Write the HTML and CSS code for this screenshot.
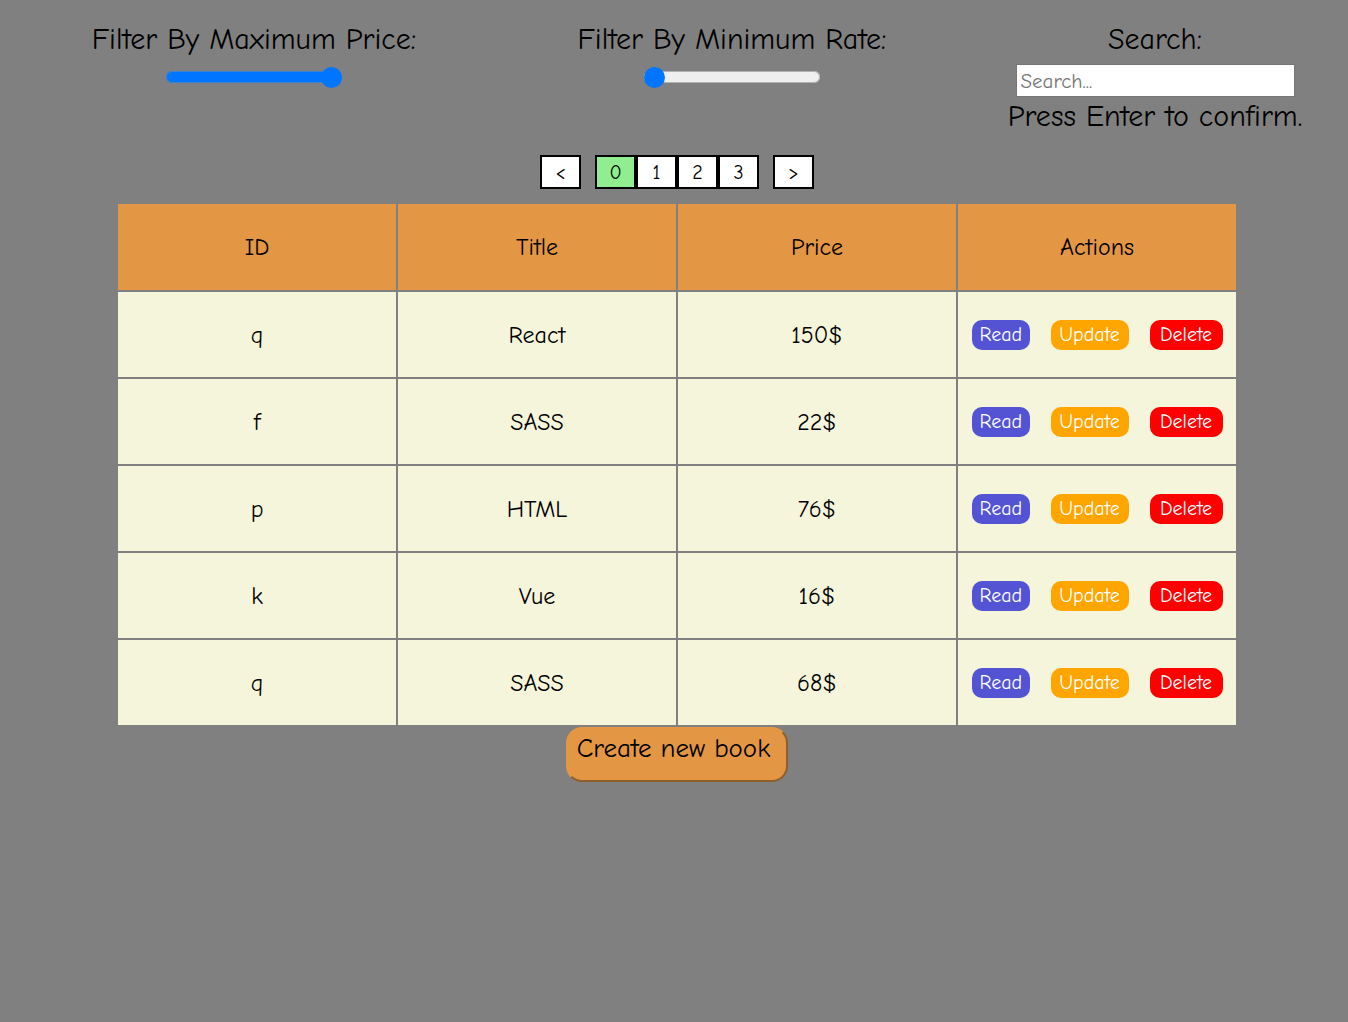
FILE: index.html
```html
<!DOCTYPE html>
<html lang="en">
<head>
<meta charset="utf-8">
<meta name="viewport" content="width=device-width, initial-scale=1">
<title>Books</title>
<link rel="stylesheet" href="styles.css">
</head>
<body>
<section class="filters">
  <div class="filter">
    <label for="max-price">Filter By Maximum Price:</label>
    <input class="slider slider-full" id="max-price" type="range" min="0" max="200" value="200">
  </div>
  <div class="filter">
    <label for="min-rate">Filter By Minimum Rate:</label>
    <input class="slider" id="min-rate" type="range" min="0" max="5" value="0">
  </div>
  <div class="filter">
    <label for="search">Search:</label>
    <input class="search" id="search" type="text" placeholder="Search...">
    <span>Press Enter to confirm.</span>
  </div>
</section>
<nav class="pagination" aria-label="Pages">
  <button class="page" type="button">&lt;</button>
  <div class="pages">
    <button class="page page-current" type="button">0</button>
    <button class="page" type="button">1</button>
    <button class="page" type="button">2</button>
    <button class="page" type="button">3</button>
  </div>
  <button class="page" type="button">&gt;</button>
</nav>
<main class="content">
  <table class="books">
    <thead>
      <tr><th>ID</th><th>Title</th><th>Price</th><th>Actions</th></tr>
    </thead>
    <tbody>
      <tr><td>q</td><td>React</td><td>150$</td><td><div class="actions"><button class="action read" type="button">Read</button><button class="action update" type="button">Update</button><button class="action delete" type="button">Delete</button></div></td></tr>
      <tr><td>f</td><td>SASS</td><td>22$</td><td><div class="actions"><button class="action read" type="button">Read</button><button class="action update" type="button">Update</button><button class="action delete" type="button">Delete</button></div></td></tr>
      <tr><td>p</td><td>HTML</td><td>76$</td><td><div class="actions"><button class="action read" type="button">Read</button><button class="action update" type="button">Update</button><button class="action delete" type="button">Delete</button></div></td></tr>
      <tr><td>k</td><td>Vue</td><td>16$</td><td><div class="actions"><button class="action read" type="button">Read</button><button class="action update" type="button">Update</button><button class="action delete" type="button">Delete</button></div></td></tr>
      <tr><td>q</td><td>SASS</td><td>68$</td><td><div class="actions"><button class="action read" type="button">Read</button><button class="action update" type="button">Update</button><button class="action delete" type="button">Delete</button></div></td></tr>
    </tbody>
  </table>
  <button class="create" type="button">Create new book</button>
</main>
</body>
</html>
```
FILE: styles.css
```css
* {
  box-sizing: border-box;
}

body {
  margin: 0;
  padding: 20px 2px 20px 8px;
  background: #808080;
  color: #000;
  font-family: "Comic Sans MS", "Comic Neue", "Noto Sans", sans-serif;
}

button,
input {
  font-family: inherit;
}

.filters {
  display: grid;
  grid-template-columns: 492fr 464fr 382fr;
  font-size: 30px;
  line-height: 40px;
}

.filter {
  display: flex;
  flex-direction: column;
  align-items: center;
}

.slider {
  appearance: none;
  width: 176px;
  height: 12px;
  margin: 11px 0;
  border-radius: 6px;
  background: #efefef;
  box-shadow: inset 0 0 0 1px #b2b2b2;
}

.slider-full {
  background: #0075ff;
  box-shadow: inset 0 0 0 1px #3f83d0;
}

.slider::-webkit-slider-thumb {
  appearance: none;
  width: 21px;
  height: 21px;
  border-radius: 50%;
  background: #0075ff;
}

.search {
  width: 279px;
  height: 33px;
  margin: 4px 0 0;
  padding: 1px 4px;
  border: 1px solid #767676;
  background: #fff;
  font-size: 21px;
}

.search::placeholder {
  color: #757575;
}

.pagination {
  display: flex;
  justify-content: center;
  gap: 14px;
  margin: 18px 0 13px;
}

.pages {
  display: flex;
}

.page {
  width: 41px;
  height: 34px;
  padding: 0;
  border: 2px solid #000;
  background: #fff;
  color: #000;
  font-size: 20px;
}

.page-current {
  background: #90ee90;
}

.content {
  display: flex;
  flex-direction: column;
  align-items: center;
  padding: 0 108px;
}

.books {
  width: 100%;
  table-layout: fixed;
  border-spacing: 2px;
  text-align: center;
  font-size: 24px;
}

.books th {
  height: 86px;
  padding: 0;
  background: #e39643;
  font-weight: 400;
}

.books td {
  height: 85px;
  padding: 0;
  background: #f5f5dc;
}

.actions {
  display: flex;
  justify-content: center;
  gap: 21px;
}

.action {
  height: 30px;
  padding: 0 8px;
  border: 0;
  border-radius: 10px;
  color: #fff;
  font-size: 20px;
}

.read {
  width: 58px;
  background: #5353d4;
}

.update {
  width: 78px;
  background: #ffa500;
}

.delete {
  width: 73px;
  background: #f00;
}

.create {
  height: 55px;
  padding: 0 16px 12px 9px;
  border: 2px outset #e39643;
  border-radius: 16px;
  background: #e39643;
  color: #000;
  font-size: 27px;
}
```
